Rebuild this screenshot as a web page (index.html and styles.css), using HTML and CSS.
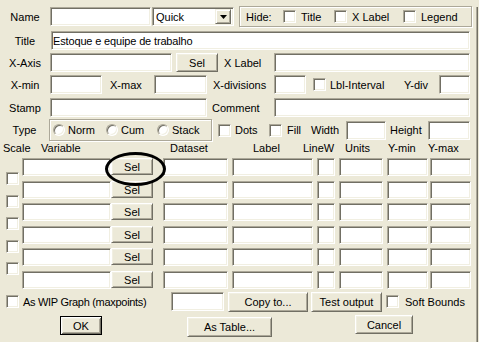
FILE: index.html
```html
<html>
<head>
    <title>Graph Settings</title>
    <link rel="stylesheet" href="styles.css">
</head>
<body>
    <div class="dlg">
        <div class="row r1">
            <span class="cap">Name</span>
            <input class="in w101" type="text">
            <div class="combo">
                <span class="combo-val">Quick</span>
                <span class="drop"><svg width="7" height="4" viewBox="0 0 7 4"><path d="M0 0h7L3.5 4z" fill="#000"/></svg></span>
            </div>
            <div class="hide-box">
                <span class="hide-cap">Hide:</span>
                <label class="opt w51"><span class="chk"></span>Title</label>
                <label class="opt w69"><span class="chk"></span>X Label</label>
                <label class="opt"><span class="chk"></span>Legend</label>
            </div>
        </div>

        <div class="row r2">
            <span class="cap">Title</span>
            <input class="in w419 ml1 title-in" type="text" value="Estoque e equipe de trabalho">
        </div>

        <div class="row r3">
            <span class="cap">X-Axis</span>
            <input class="in w122" type="text">
            <button class="btn w42 ml4">Sel</button>
            <span class="lbl w56 pl6">X Label</span>
            <input class="in w196" type="text">
        </div>

        <div class="row r4">
            <span class="cap">X-min</span>
            <input class="in w52" type="text">
            <span class="lbl w52 pl8">X-max</span>
            <input class="in w53" type="text">
            <span class="lbl w67 pl6">X-divisions</span>
            <input class="in w32" type="text">
            <label class="opt w91 ml7 tight"><span class="chk"></span>Lbl-Interval</label>
            <span class="lbl w35">Y-div</span>
            <input class="in w31" type="text">
        </div>

        <div class="row r5">
            <span class="cap">Stamp</span>
            <input class="in w157" type="text">
            <span class="lbl w67 pl5">Comment</span>
            <input class="in w196" type="text">
        </div>

        <div class="row r6">
            <span class="cap w49">Type</span>
            <div class="radio-box">
                <label class="ropt w53"><span class="radio"></span>Norm</label>
                <label class="ropt w51"><span class="radio"></span>Cum</label>
                <label class="ropt"><span class="radio"></span>Stack</label>
            </div>
            <label class="opt w51 ml6 tight"><span class="chk"></span>Dots</label>
            <label class="opt w42"><span class="chk"></span>Fill</label>
            <span class="lbl w35">Width</span>
            <input class="in w40" type="text">
            <span class="lbl w42 pl4">Height</span>
            <input class="in w42" type="text">
        </div>

        <div class="row heads">
            <span class="w41 pl3">Scale</span>
            <span class="w129">Variable</span>
            <span class="w83">Dataset</span>
            <span class="w50">Label</span>
            <span class="w42">LineW</span>
            <span class="w43">Units</span>
            <span class="w40">Y-min</span>
            <span>Y-max</span>
        </div>

        <div class="table">
            <div class="scale-col">
                <span class="chk"></span>
                <span class="chk"></span>
                <span class="chk"></span>
                <span class="chk"></span>
                <span class="chk"></span>
            </div>
            <div class="rows">
                <div class="trow">
                    <input class="in v-var" type="text">
                    <span class="mark"><button class="btn v-sel">Sel</button></span>
                    <input class="in v-ds" type="text">
                    <input class="in v-lbl" type="text">
                    <input class="in v-lw" type="text">
                    <input class="in v-un" type="text">
                    <input class="in v-min" type="text">
                    <input class="in v-max" type="text">
                </div>
                <div class="trow">
                    <input class="in v-var" type="text">
                    <button class="btn v-sel">Sel</button>
                    <input class="in v-ds" type="text">
                    <input class="in v-lbl" type="text">
                    <input class="in v-lw" type="text">
                    <input class="in v-un" type="text">
                    <input class="in v-min" type="text">
                    <input class="in v-max" type="text">
                </div>
                <div class="trow">
                    <input class="in v-var" type="text">
                    <button class="btn v-sel">Sel</button>
                    <input class="in v-ds" type="text">
                    <input class="in v-lbl" type="text">
                    <input class="in v-lw" type="text">
                    <input class="in v-un" type="text">
                    <input class="in v-min" type="text">
                    <input class="in v-max" type="text">
                </div>
                <div class="trow">
                    <input class="in v-var" type="text">
                    <button class="btn v-sel">Sel</button>
                    <input class="in v-ds" type="text">
                    <input class="in v-lbl" type="text">
                    <input class="in v-lw" type="text">
                    <input class="in v-un" type="text">
                    <input class="in v-min" type="text">
                    <input class="in v-max" type="text">
                </div>
                <div class="trow">
                    <input class="in v-var" type="text">
                    <button class="btn v-sel">Sel</button>
                    <input class="in v-ds" type="text">
                    <input class="in v-lbl" type="text">
                    <input class="in v-lw" type="text">
                    <input class="in v-un" type="text">
                    <input class="in v-min" type="text">
                    <input class="in v-max" type="text">
                </div>
                <div class="trow">
                    <input class="in v-var" type="text">
                    <button class="btn v-sel">Sel</button>
                    <input class="in v-ds" type="text">
                    <input class="in v-lbl" type="text">
                    <input class="in v-lw" type="text">
                    <input class="in v-un" type="text">
                    <input class="in v-min" type="text">
                    <input class="in v-max" type="text">
                </div>
            </div>
        </div>

        <div class="row foot1">
            <label class="opt w165 wip"><span class="chk"></span>As WIP Graph (maxpoints)</label>
            <input class="in w53" type="text">
            <button class="btn w80 ml4 h20">Copy to...</button>
            <button class="btn w71 ml3 h20">Test output</button>
            <label class="opt ml4 wide"><span class="chk"></span>Soft Bounds</label>
        </div>

        <div class="row foot2">
            <button class="btn btn-default">OK</button>
            <button class="btn btn-table h20">As Table...</button>
            <button class="btn btn-cancel">Cancel</button>
        </div>
    </div>
</body>
</html>
```

FILE: styles.css
```css
* {
    box-sizing: border-box;
}

body {
    margin: 0;
    background: #ECE9D8;
    font-family: "Liberation Sans", Arial, sans-serif;
    font-size: 11px;
    color: #000;
}

.dlg {
    width: 478px;
    height: 341px;
    border-right: 1px solid #716F64;
    border-bottom: 1px solid #716F64;
    box-shadow: inset -1px -1px 0 #ACA899;
}

.row {
    display: flex;
    align-items: center;
    white-space: nowrap;
}

.r1 { margin-top: 7px; height: 19px; }
.r2 { margin-top: 5px; height: 19px; }
.r3 { margin-top: 3px; height: 19px; }
.r4 { margin-top: 3px; height: 19px; }
.r5 { margin-top: 4px; height: 19px; }
.r6 { margin-top: 2px; height: 22px; }
.heads { height: 14px; }

.cap {
    width: 50px;
    flex-shrink: 0;
    text-align: center;
}

.lbl {
    flex-shrink: 0;
}

/* sunken edit box */
.in {
    height: 19px;
    flex-shrink: 0;
    margin: 0;
    padding: 0 1px;
    border: 1px solid;
    border-color: #ACA899 #fff #fff #ACA899;
    box-shadow: inset 1px 1px 0 #716F64, inset -1px -1px 0 #F1EFE2;
    background: #fff;
    font: inherit;
    color: #000;
    outline: none;
}

.title-in {
    letter-spacing: -0.15px;
}

/* raised push button */
.btn {
    height: 19px;
    flex-shrink: 0;
    margin: 0;
    padding: 0;
    border: 1px solid;
    border-color: #fff #716F64 #716F64 #fff;
    box-shadow: inset 1px 1px 0 #F1EFE2, inset -1px -1px 0 #ACA899;
    background: #ECE9D8;
    font: inherit;
    color: #000;
}

.h20 { height: 20px; }

.btn-default {
    width: 42px;
    margin-left: 60px;
    border: 1px solid #000;
    box-shadow: inset 1px 1px 0 #fff, inset -1px -1px 0 #716F64, inset 2px 2px 0 #F1EFE2, inset -2px -2px 0 #ACA899;
}

.btn-table { width: 85px; margin-left: 85px; align-self: flex-start; margin-top: 1px; }
.btn-cancel { width: 58px; margin-left: 83px; align-self: flex-start; margin-top: -1px; }

.combo {
    width: 82px;
    height: 19px;
    margin-left: 1px;
    flex-shrink: 0;
    display: flex;
    align-items: center;
    justify-content: space-between;
    padding: 2px;
    border: 1px solid;
    border-color: #ACA899 #fff #fff #ACA899;
    box-shadow: inset 1px 1px 0 #716F64, inset -1px -1px 0 #F1EFE2;
    background: #fff;
}

.combo-val {
    padding-left: 1px;
}

.drop {
    width: 16px;
    height: 15px;
    display: flex;
    align-items: center;
    justify-content: center;
    background: #ECE9D8;
    border: 1px solid;
    border-color: #F1EFE2 #716F64 #716F64 #F1EFE2;
    box-shadow: inset 1px 1px 0 #fff, inset -1px -1px 0 #ACA899;
}

.hide-box {
    width: 233px;
    height: 21px;
    margin-left: 5px;
    display: flex;
    align-items: center;
    padding-left: 6px;
    border: 1px solid #ACA899;
    box-shadow: inset 1px 1px 0 #fff, 1px 1px 0 #fff;
}

.hide-cap { width: 37px; }

.opt {
    display: flex;
    align-items: center;
    flex-shrink: 0;
}

.opt .chk { margin-right: 5px; }
.opt.tight .chk { margin-right: 4px; }
.opt.wide .chk { margin-right: 6px; }

.wip {
    letter-spacing: -0.3px;
}

.wip .chk { margin-right: 4px; }

.chk {
    display: block;
    width: 13px;
    height: 13px;
    flex-shrink: 0;
    border: 1px solid;
    border-color: #ACA899 #fff #fff #ACA899;
    box-shadow: inset 1px 1px 0 #716F64, inset -1px -1px 0 #F1EFE2;
    background: #fff;
}

.radio-box {
    width: 163px;
    height: 22px;
    flex-shrink: 0;
    display: flex;
    align-items: center;
    padding-left: 3px;
    border: 1px solid #ACA899;
    box-shadow: inset 1px 1px 0 #fff, 1px 1px 0 #fff;
}

.ropt {
    display: flex;
    align-items: center;
    flex-shrink: 0;
}

.radio {
    display: block;
    width: 12px;
    height: 12px;
    margin-right: 3px;
    border-radius: 50%;
    border: 1px solid;
    border-color: #ACA899 #fff #fff #ACA899;
    box-shadow: inset 1px 1px 0 #716F64, inset -1px -1px 0 #F1EFE2;
    background: #fff;
}

.table {
    display: flex;
    margin-top: 3px;
}

.scale-col {
    width: 22px;
    padding: 14px 0 0 6px;
}

.scale-col .chk {
    margin-bottom: 9.5px;
}

.trow {
    display: flex;
    height: 18px;
}

.trow + .trow { margin-top: 4px; }
.trow:nth-child(even) { margin-top: 5px; }

.trow .in { height: 18px; }

.v-var { width: 89px; }
.v-sel { width: 42px; height: 17px; }
.v-ds { width: 65px; margin-left: 10px; }
.v-lbl { width: 81px; margin-left: 4px; }
.v-lw { width: 18px; margin-left: 4px; }
.v-un { width: 44px; margin-left: 4px; }
.v-min { width: 41px; margin-left: 4px; }
.v-max { width: 41px; margin-left: 2px; }

/* hand-drawn ring around the first Sel */
.mark {
    position: relative;
    display: flex;
}

.mark::after {
    content: "";
    position: absolute;
    left: -6px;
    top: -6px;
    width: 55px;
    height: 28px;
    border: 3px solid #000;
    border-radius: 50%;
}

.foot1 {
    margin-top: 2px;
    height: 21px;
    padding-left: 6px;
}

.foot2 {
    margin-top: 4px;
    height: 19px;
}

.w31 { width: 31px; }
.w32 { width: 32px; }
.w35 { width: 35px; }
.w40 { width: 40px; }
.w41 { width: 41px; }
.w42 { width: 42px; }
.w43 { width: 43px; }
.w49 { width: 49px; }
.w50 { width: 50px; }
.w51 { width: 51px; }
.w52 { width: 52px; }
.w53 { width: 53px; }
.w56 { width: 56px; }
.w67 { width: 67px; }
.w69 { width: 69px; }
.w71 { width: 71px; }
.w80 { width: 80px; }
.w83 { width: 83px; }
.w91 { width: 91px; }
.w101 { width: 101px; }
.w122 { width: 122px; }
.w129 { width: 129px; }
.w157 { width: 157px; }
.w165 { width: 165px; }
.w196 { width: 196px; }
.w419 { width: 419px; }

.ml1 { margin-left: 1px; }
.ml3 { margin-left: 3px; }
.ml4 { margin-left: 4px; }
.ml6 { margin-left: 6px; }
.ml7 { margin-left: 7px; }

.pl3 { padding-left: 3px; }
.pl4 { padding-left: 4px; }
.pl5 { padding-left: 5px; }
.pl6 { padding-left: 6px; }
.pl8 { padding-left: 8px; }
```
